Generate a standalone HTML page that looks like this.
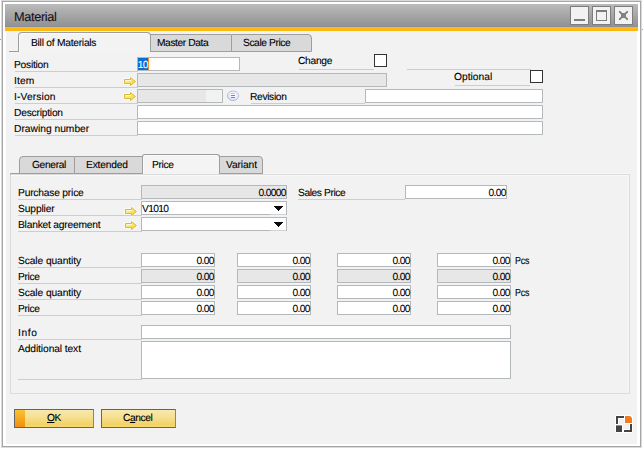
<!DOCTYPE html>
<html><head><meta charset="utf-8"><title>Material</title>
<style>
html,body{margin:0;padding:0;}
body{width:643px;height:451px;background:#fff;position:relative;overflow:hidden;font-family:"Liberation Sans",sans-serif;font-size:10.25px;line-height:13px;color:#000;text-rendering:geometricPrecision;-webkit-text-stroke:0.1px;}
div,span{position:absolute;box-sizing:border-box;}
.t{white-space:nowrap;height:13px;}
.ul{height:1px;background:#cdcdcd;}
.in{height:14px;border:1px solid #b3b8ba;background:#fff;}
.dis{background:#e7e7e7;}
.num{right:0.3px;top:1px;letter-spacing:-0.7px;}
.cb{width:13px;height:13px;border:1px solid #333;background:#fff;}
.tab{background:#d9d9d9;border:1px solid #9e9e9e;border-radius:2px 3px 0 0;}
.dd{right:3px;top:4px;width:9px;height:5px;}
.ddb{right:0;bottom:-1px;width:16px;height:1px;background:#cdd1d3;}
.btn{height:19px;border:1px solid #646464;border-right-color:#858585;background:linear-gradient(#f8e8b0 0%,#f6df8e 45%,#f2d266 85%,#f7da70 100%);}
.wb{top:6px;width:19px;height:19px;border:1px solid #7d7d7d;background:#f2f2f2;}
</style></head><body>
<!-- outside frame -->
<div style="left:1px;top:0;width:641px;height:448px;background:#dadada"></div>
<div style="left:0;top:39px;width:1px;height:1px;background:#9a9a9a"></div>
<div style="left:642px;top:29px;width:1px;height:1px;background:#a5a5a5"></div>
<div style="left:2px;top:1px;width:639px;height:446px;border:1px solid #a6a6a6;background:#fff"></div>
<!-- title bar -->
<div style="left:5px;top:4px;width:633px;height:23px;background:linear-gradient(#babbba,#909090)"></div>
<div style="left:5px;top:26px;width:633px;height:1px;background:#8d8f98"></div>
<div style="left:5px;top:27px;width:633px;height:4px;background:linear-gradient(#fdbb16,#fbb50f)"></div>
<span class="t" id="title" style="left:14px;top:10px;font-size:12.75px;letter-spacing:-0.35px;height:14px;line-height:14px;color:#16101c">Material</span>
<div class="wb" style="left:570px"><div style="left:3px;top:12px;width:11px;height:2px;background:#7d7d7d"></div></div>
<div class="wb" style="left:592px"><div style="left:3px;top:3px;width:11px;height:11px;border:1px solid #7d7d7d;border-top-width:2px"></div></div>
<div class="wb" style="left:614px"><svg style="position:absolute;left:3px;top:3px" width="11" height="11" viewBox="0 0 11 11"><path d="M1.8 1.8L9.2 9.2M9.2 1.8L1.8 9.2" stroke="#7d7d7d" stroke-width="1.9" stroke-linecap="round"/><rect x="3" y="3" width="5" height="5" fill="#828282"/></svg></div>
<!-- content -->
<div style="left:6px;top:31px;width:631px;height:413px;background:#f2f2f2;border-top:1px solid #f1f3fa"></div>

<!-- main tabs -->
<div style="left:9px;top:51px;width:10px;height:1px;background:#9e9e9e"></div>
<div style="left:18px;top:32px;width:133px;height:20px;border:1px solid #9e9e9e;border-bottom:none;border-radius:4px 4px 0 0;background:#f3f3f3;box-shadow:inset 1px 1px 0 #fafafa"></div>
<div class="tab" style="left:150px;top:34px;width:82px;height:18px;border-radius:1px 1px 0 0"></div>
<div class="tab" style="left:231px;top:34px;width:81px;height:18px;border-radius:1px 4px 0 0"></div>
<span class="t" id="t_bom" style="letter-spacing:-0.25px;left:31px;top:37px">Bill of Materials</span>
<span class="t" id="t_md" style="letter-spacing:-0.42px;left:157px;top:37px">Master Data</span>
<span class="t" id="t_sp" style="letter-spacing:-0.42px;left:243px;top:37px">Scale Price</span>

<!-- header rows -->
<span class="t" id="l_pos" style="letter-spacing:-0.25px;left:14px;top:59px">Position</span>
<span class="t" id="l_item" style="letter-spacing:0.1px;left:14px;top:75px">Item</span>
<span class="t" id="l_iv" style="letter-spacing:0.12px;left:14px;top:91px">I-Version</span>
<span class="t" id="l_desc" style="letter-spacing:-0.22px;left:14px;top:107px">Description</span>
<span class="t" id="l_draw" style="letter-spacing:0px;left:14px;top:123px">Drawing number</span>
<div class="ul" style="left:15px;top:71px;width:123px"></div>
<div class="ul" style="left:15px;top:87px;width:123px"></div>
<div class="ul" style="left:15px;top:103px;width:123px"></div>
<div class="ul" style="left:15px;top:119px;width:123px"></div>
<div class="ul" style="left:15px;top:135px;width:123px"></div>

<div class="in" style="left:137px;top:57px;width:103px">
  <div style="left:0;top:0;width:10px;height:12px;background:#0a6cd6"></div>
  <div style="left:10px;top:0;width:1px;height:12px;background:#f58220"></div>
  <span class="t" id="v_pos" style="letter-spacing:-0.8px;left:-0.2px;top:1px;color:#fff">10</span>
</div>
<div class="in dis" style="left:137px;top:73px;width:250px"></div>
<div class="in dis" style="left:137px;top:89px;width:86px"><div style="left:68px;top:0;width:16px;height:12px;background:#f2f2f2"></div></div>
<div class="in" style="left:365px;top:89px;width:178px"></div>
<div class="in" style="left:137px;top:105px;width:406px"></div>
<div class="in" style="left:137px;top:121px;width:406px"></div>

<span class="t" id="l_chg" style="letter-spacing:-0.3px;left:298px;top:55px">Change</span>
<div class="ul" style="left:299px;top:69px;width:75px"></div>
<div class="cb" style="left:374px;top:54px"></div>
<div class="ul" style="left:407px;top:69px;width:124px"></div>
<span class="t" id="l_opt" style="letter-spacing:0px;left:454px;top:71px">Optional</span>
<div class="ul" style="left:455px;top:85px;width:75px"></div>
<div class="cb" style="left:530px;top:70px"></div>
<span class="t" id="l_rev" style="letter-spacing:-0.35px;left:250px;top:91px">Revision</span>
<div class="ul" style="left:251px;top:103px;width:114px"></div>

<!-- link arrows -->
<svg class="arr" style="position:absolute;left:123px;top:76px" width="14" height="11" viewBox="0 0 14 11"><path d="M1.5 3.5H7.5V1.5L12.5 5.5L7.5 9.5V7.5H1.5Z" fill="none" stroke="#fbfbf6" stroke-width="2.4" stroke-linejoin="round"/><path d="M1.5 3.5H7.5V1.5L12.5 5.5L7.5 9.5V7.5H1.5Z" fill="url(#ag)" stroke="#d3b32e" stroke-width="0.9" stroke-linejoin="round"/><path d="M2.5 4.6H8" stroke="#fffef0" stroke-width="0.9" opacity="0.9"/></svg>
<svg class="arr" style="position:absolute;left:123px;top:91.4px" width="14" height="11" viewBox="0 0 14 11"><path d="M1.5 3.5H7.5V1.5L12.5 5.5L7.5 9.5V7.5H1.5Z" fill="none" stroke="#fbfbf6" stroke-width="2.4" stroke-linejoin="round"/><path d="M1.5 3.5H7.5V1.5L12.5 5.5L7.5 9.5V7.5H1.5Z" fill="url(#ag)" stroke="#d3b32e" stroke-width="0.9" stroke-linejoin="round"/><path d="M2.5 4.6H8" stroke="#fffef0" stroke-width="0.9" opacity="0.9"/></svg>
<svg class="arr" style="position:absolute;left:124px;top:205.5px" width="14" height="11" viewBox="0 0 14 11"><path d="M1.5 3.5H7.5V1.5L12.5 5.5L7.5 9.5V7.5H1.5Z" fill="none" stroke="#fbfbf6" stroke-width="2.4" stroke-linejoin="round"/><path d="M1.5 3.5H7.5V1.5L12.5 5.5L7.5 9.5V7.5H1.5Z" fill="url(#ag)" stroke="#d3b32e" stroke-width="0.9" stroke-linejoin="round"/><path d="M2.5 4.6H8" stroke="#fffef0" stroke-width="0.9" opacity="0.9"/></svg>
<svg class="arr" style="position:absolute;left:124px;top:220.2px" width="14" height="11" viewBox="0 0 14 11"><path d="M1.5 3.5H7.5V1.5L12.5 5.5L7.5 9.5V7.5H1.5Z" fill="none" stroke="#fbfbf6" stroke-width="2.4" stroke-linejoin="round"/><path d="M1.5 3.5H7.5V1.5L12.5 5.5L7.5 9.5V7.5H1.5Z" fill="url(#ag)" stroke="#d3b32e" stroke-width="0.9" stroke-linejoin="round"/><path d="M2.5 4.6H8" stroke="#fffef0" stroke-width="0.9" opacity="0.9"/></svg>
<svg width="0" height="0" style="position:absolute"><defs>
<linearGradient id="ag" x1="0" y1="0" x2="1" y2="1"><stop offset="0" stop-color="#fff8b4"/><stop offset="1" stop-color="#f3d120"/></linearGradient>
</defs></svg>

<!-- circle icon -->
<svg style="position:absolute;left:226px;top:90px" width="14" height="12" viewBox="0 0 14 12"><defs><radialGradient id="cg" cx="0.55" cy="0.4" r="0.6"><stop offset="0" stop-color="#ffffff"/><stop offset="0.6" stop-color="#eef0f8"/><stop offset="1" stop-color="#c9d0ea"/></radialGradient></defs><ellipse cx="7" cy="5.8" rx="5.6" ry="4.8" fill="url(#cg)" stroke="#b3bbdd" stroke-width="0.9"/><path d="M5 3.5H9" stroke="#c4c4c8" stroke-width="1"/><path d="M5 5.5H9M5 7.5H9" stroke="#85858a" stroke-width="1"/></svg>

<!-- inner panel -->
<div style="left:10px;top:174px;width:620px;height:220px;border:1px solid #dbdbdb;box-shadow:inset -1px 1px 0 #f8f8f8"></div>
<div style="left:263px;top:173px;width:367px;height:1px;background:#f9f9f9"></div>
<div style="left:10px;top:173px;width:133px;height:1px;background:#9e9e9e"></div>
<div style="left:10px;top:173px;width:1px;height:2px;background:#b8b8b8"></div>
<div style="left:219px;top:173px;width:44px;height:1px;background:#9e9e9e"></div>
<div class="tab" style="left:19px;top:156px;width:56px;height:18px;border-radius:4px 1px 0 0"></div>
<div class="tab" style="left:74px;top:156px;width:69px;height:18px;border-radius:1px 0 0 0"></div>
<div class="tab" style="left:219px;top:156px;width:44px;height:18px;border-radius:0 4px 0 0"></div>
<div style="left:142px;top:154px;width:78px;height:20px;border:1px solid #9e9e9e;border-bottom:none;border-radius:3px 3px 0 0;background:#f4f4f4;box-shadow:inset 1px 1px 0 #fbfbfb"></div>
<span class="t" id="t_gen" style="letter-spacing:-0.35px;left:32px;top:159px">General</span>
<span class="t" id="t_ext" style="letter-spacing:-0.2px;left:86px;top:159px">Extended</span>
<span class="t" id="t_pri" style="letter-spacing:-0.35px;left:152px;top:159px">Price</span>
<span class="t" id="t_var" style="letter-spacing:-0.12px;left:226px;top:159px">Variant</span>

<span class="t" id="l_pp" style="letter-spacing:-0.2px;left:18px;top:187px">Purchase price</span>
<span class="t" id="l_sup" style="letter-spacing:-0.12px;left:18px;top:203px">Supplier</span>
<span class="t" id="l_ba" style="letter-spacing:-0.22px;left:18px;top:219px">Blanket agreement</span>
<div class="ul" style="left:18px;top:199px;width:124px"></div>
<div class="ul" style="left:18px;top:215px;width:124px"></div>
<div class="ul" style="left:18px;top:231px;width:124px"></div>
<div class="in dis" style="left:141px;top:185px;width:146px"><span class="t num" id="v_pp">0.0000</span></div>
<div class="in" style="left:141px;top:201px;width:146px"><span class="t" id="v_sup" style="letter-spacing:-0.7px;left:0px;top:1px">V1010</span><svg class="dd" style="position:absolute" width="9" height="5" viewBox="0 0 9 5" shape-rendering="crispEdges"><path d="M0 0H9V1H8V2H7V3H6V4H5V5H4V4H3V3H2V2H1V1H0Z" fill="#0a0a0a"/></svg><div class="ddb"></div></div>
<div class="in" style="left:141px;top:217px;width:146px"><svg class="dd" style="position:absolute" width="9" height="5" viewBox="0 0 9 5" shape-rendering="crispEdges"><path d="M0 0H9V1H8V2H7V3H6V4H5V5H4V4H3V3H2V2H1V1H0Z" fill="#0a0a0a"/></svg><div class="ddb"></div></div>
<span class="t" id="l_sale" style="letter-spacing:-0.42px;left:298px;top:187px">Sales Price</span>
<div class="ul" style="left:298px;top:199px;width:107px"></div>
<div class="in" style="left:405px;top:185px;width:102px"><span class="t num">0.00</span></div>

<span class="t" id="l_sq1" style="letter-spacing:-0.1px;left:18px;top:255px">Scale quantity</span>
<span class="t" id="l_p1" style="letter-spacing:-0.35px;left:18px;top:271px">Price</span>
<span class="t" id="l_sq2" style="letter-spacing:-0.1px;left:18px;top:287px">Scale quantity</span>
<span class="t" id="l_p2" style="letter-spacing:-0.35px;left:18px;top:303px">Price</span>
<div class="ul" style="left:18px;top:267px;width:124px"></div>
<div class="ul" style="left:18px;top:283px;width:124px"></div>
<div class="ul" style="left:18px;top:299px;width:124px"></div>
<div class="ul" style="left:18px;top:315px;width:124px"></div>

<div class="in" style="left:141px;top:253px;width:74px"><span class="t num">0.00</span></div>
<div class="in" style="left:237px;top:253px;width:74px"><span class="t num">0.00</span></div>
<div class="in" style="left:337px;top:253px;width:74px"><span class="t num">0.00</span></div>
<div class="in" style="left:437px;top:253px;width:74px"><span class="t num">0.00</span></div>
<div class="in dis" style="left:141px;top:269px;width:74px"><span class="t num">0.00</span></div>
<div class="in dis" style="left:237px;top:269px;width:74px"><span class="t num">0.00</span></div>
<div class="in dis" style="left:337px;top:269px;width:74px"><span class="t num">0.00</span></div>
<div class="in dis" style="left:437px;top:269px;width:74px"><span class="t num">0.00</span></div>
<div class="in" style="left:141px;top:285px;width:74px"><span class="t num">0.00</span></div>
<div class="in" style="left:237px;top:285px;width:74px"><span class="t num">0.00</span></div>
<div class="in" style="left:337px;top:285px;width:74px"><span class="t num">0.00</span></div>
<div class="in" style="left:437px;top:285px;width:74px"><span class="t num">0.00</span></div>
<div class="in" style="left:141px;top:301px;width:74px"><span class="t num">0.00</span></div>
<div class="in" style="left:237px;top:301px;width:74px"><span class="t num">0.00</span></div>
<div class="in" style="left:337px;top:301px;width:74px"><span class="t num">0.00</span></div>
<div class="in" style="left:437px;top:301px;width:74px"><span class="t num">0.00</span></div>
<span class="t" id="pcs1" style="letter-spacing:-0.2px;transform:scaleX(0.87);transform-origin:0 0;left:515px;top:255px">Pcs</span>
<span class="t" id="pcs2" style="letter-spacing:-0.2px;transform:scaleX(0.87);transform-origin:0 0;left:515px;top:287px">Pcs</span>

<span class="t" id="l_info" style="letter-spacing:0.6px;left:18px;top:327px">Info</span>
<span class="t" id="l_add" style="letter-spacing:-0.1px;left:18px;top:343px">Additional text</span>
<div class="ul" style="left:18px;top:339px;width:124px"></div>
<div class="ul" style="left:18px;top:379px;width:124px"></div>
<div class="in" style="left:141px;top:325px;width:370px"></div>
<div class="in" style="left:141px;top:341px;width:370px;height:38px"></div>

<!-- buttons -->
<div class="btn" style="left:14px;top:409px;width:80px"><div style="left:0;top:0;width:10px;height:17px;background:linear-gradient(#f9c235,#f0900e)"></div><span class="t" id="b_ok" style="letter-spacing:-0.5px;left:32px;top:2px"><u>O</u>K</span></div>
<div class="btn" style="left:101px;top:409px;width:75px"><span class="t" id="b_ca" style="letter-spacing:-0.45px;left:21px;top:2px">C<u>a</u>ncel</span></div>

<!-- resize icon -->
<svg style="position:absolute;left:615px;top:415px" width="18" height="18" viewBox="0 0 18 18">
<rect x="0" y="0" width="18" height="18" fill="none"/>
<path d="M0.5 0.5H9.5V3.5H3.5V9.5H0.5Z M9.5 0.5H17.5V8.5H9.5Z M0.5 9.5H7.5V17.5H0.5Z M14.5 8.5H17.5V17.5H8.5V14.5H14.5Z" fill="#fff" stroke="#fff" stroke-width="1"/>
<path d="M1 1H9V3H3V9H1Z" fill="#444"/>
<path d="M10 1H15L17 3V8H10Z" fill="#f47a20"/>
<rect x="1" y="10.4" width="6" height="6.6" fill="#444"/>
<path d="M15 9H17V17H9V15H15Z" fill="#444"/>
</svg>
</body></html>
